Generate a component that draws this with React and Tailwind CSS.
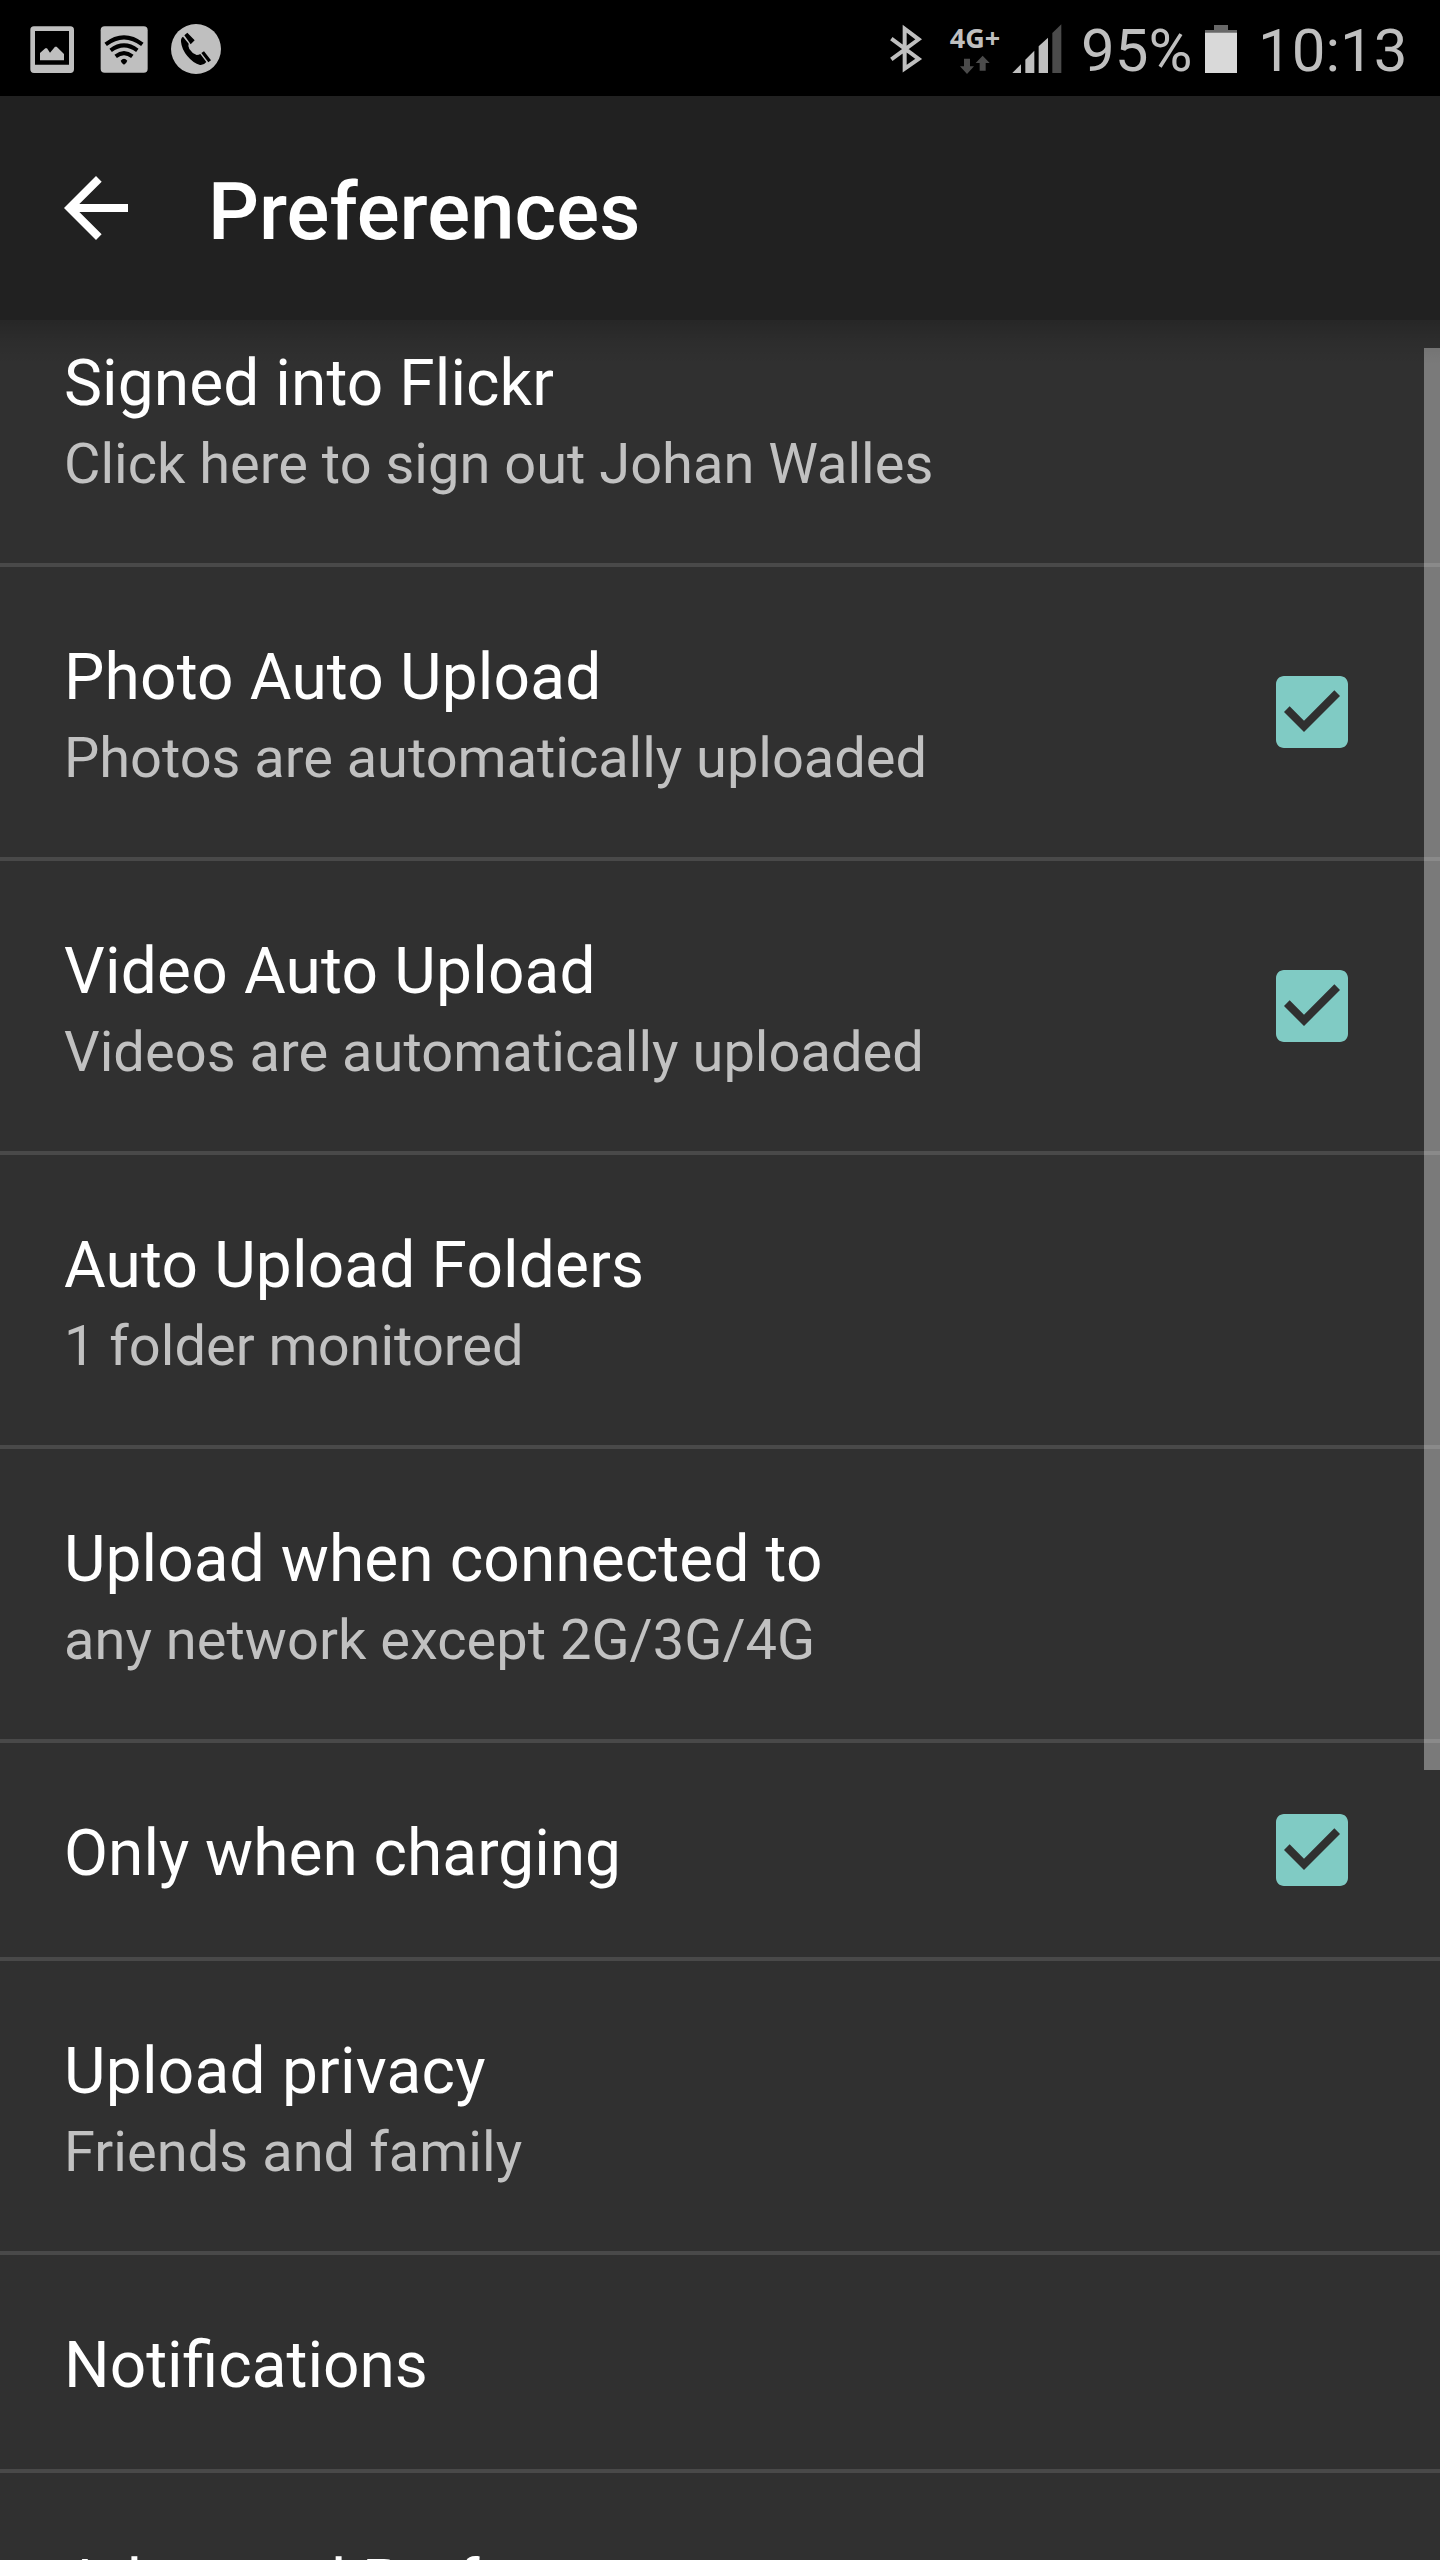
import React from "react";

const rows = [
  { title: "Signed into Flickr", summary: "Click here to sign out Johan Walles", tracking: "tracking-[0.08px]" },
  { title: "Photo Auto Upload", summary: "Photos are automatically uploaded", checked: true, tracking: "tracking-[0.17px]", summaryTracking: "tracking-[-0.04px]" },
  { title: "Video Auto Upload", summary: "Videos are automatically uploaded", checked: true, tracking: "tracking-[0.2px]", summaryTracking: "tracking-[0.03px]" },
  { title: "Auto Upload Folders", summary: "1 folder monitored", tracking: "tracking-[0.16px]" },
  { title: "Upload when connected to", summary: "any network except 2G/3G/4G", tracking: "tracking-[0.08px]", summaryTracking: "tracking-[0.02px]" },
  { title: "Only when charging", checked: true },
  { title: "Upload privacy", summary: "Friends and family", tracking: "tracking-[0.23px]", summaryTracking: "tracking-[0.04px]" },
  { title: "Notifications" },
  { title: "Advanced Preferences" },
];

function ImageIcon() {
  return (
    <svg className="ml-[30px] mt-[3px] h-[48px] w-[44px] shrink-0" viewBox="90 76 132 144" fill="#bfbfbf">
      <path fillRule="evenodd" d="M102 77H211Q222 77 222 88V206Q222 217 211 217H102Q91 217 91 206V88Q91 77 102 77ZM105 91V192H207V91Z" />
      <path d="M120 157L136 143H141L150 156L165 138H170L192 160V179H120Z" />
    </svg>
  );
}

function WifiIcon() {
  return (
    <svg className="ml-[26px] mt-[3px] h-[48px] w-[48px] shrink-0" viewBox="300 76 144 144">
      <rect x="302" y="77" width="141" height="139" rx="12" fill="#bfbfbf" />
      <g fill="none" stroke="#000" strokeWidth="12">
        <path d="M317 131Q372 89 427 131" />
        <path d="M332 149Q372 119 412 149" />
        <path d="M347 167Q372 148 397 167" />
      </g>
      <path d="M362 180Q372 168 382 180Q380 187 372 192Q364 187 362 180Z" />
    </svg>
  );
}

function PhoneIcon() {
  return (
    <svg className="ml-[22px] mt-[2px] h-[52px] w-[52px] shrink-0" viewBox="510 69 156 156">
      <circle cx="588" cy="147" r="75" fill="#bfbfbf" />
      <path d="M549 110L566 131Q563 139 568 147Q576 160 590 165Q596 165 601 162L619 186Q612 196 600 195Q580 190 562 168Q545 147 543 125Q542 114 549 110Z" />
      <path d="M553 106L562 98L584 121L572 133ZM604 159L612 154L633 181L625 187Z" />
    </svg>
  );
}

function BluetoothIcon() {
  return (
    <svg className="mt-[2px] h-[50px] w-[34px] shrink-0" viewBox="86 72 102 150" fill="none" stroke="#bfbfbf" strokeWidth="12">
      <path d="M93 116L175 177L133 206V86L175 118L93 178" />
    </svg>
  );
}

function NetworkIcon() {
  return (
    <div className="ml-[26px] flex w-[52px] shrink-0 flex-col items-center pt-[3px]">
      <div className="h-[26px] whitespace-nowrap font-['Open_Sans','Noto_Sans',sans-serif] text-[27px] font-bold leading-[26px] text-[#bfbfbf]">4G+</div>
      <svg className="mt-[4px] h-[20px] w-[30px]" viewBox="299 163 90 60" fill="#4b4b4b">
        <path d="M311 174H329V197H341L320 220L299 197H311Z" />
        <path d="M358 210H376V187H388L367 165L346 187H358Z" />
      </svg>
    </div>
  );
}

function SignalIcon() {
  return (
    <svg className="ml-[11px] mt-[2px] h-[50px] w-[50px] shrink-0" viewBox="455 72 150 150" fill="#bfbfbf">
      <path d="M456 219L482 193V219Z" />
      <path d="M495 219V179L522 152V219Z" />
      <path d="M535 219V139L563 113V219Z" />
      <path d="M576 219V99L603 73V219Z" fill="#4b4b4b" />
    </svg>
  );
}

function BatteryIcon() {
  return (
    <svg className="mt-[2px] h-[48px] w-[32px] shrink-0" viewBox="435 75 96 144">
      <path d="M462 75H504V90H531V99H435V90H462Z" fill="#686868" />
      <path d="M435 98H531V219H435Z" fill="#d9d9d9" />
    </svg>
  );
}

function StatusBar() {
  return (
    <div className="flex h-[96px] shrink-0 items-center bg-black text-[60px] leading-[70px] text-[#bfbfbf]">
      <ImageIcon />
      <WifiIcon />
      <PhoneIcon />
      <div className="ml-auto flex items-center">
        <BluetoothIcon />
        <NetworkIcon />
        <SignalIcon />
        <span className="ml-[19px] mt-[6px] w-[124px]">95%</span>
        <BatteryIcon />
        <span className="ml-[21px] mt-[6px] w-[182px]">10:13</span>
      </div>
    </div>
  );
}

function CheckBox() {
  return (
    <svg className="mr-[80px] h-[96px] w-[96px] shrink-0" viewBox="0 0 24 24" fill="#80cbc4">
      <path d="M19 3H5c-1.11 0-2 .9-2 2v14c0 1.1.89 2 2 2h14c1.11 0 2-.9 2-2V5c0-1.1-.89-2-2-2zm-9 14l-5-5 1.41-1.41L10 14.17l7.59-7.59L19 8l-9 9z" />
    </svg>
  );
}

function PreferenceRow({ title, summary, checked, tracking = "", summaryTracking = "" }) {
  return (
    <li className="flex items-center justify-between border-b-4 border-[#494949]">
      <div className="self-stretch pb-[61px] pl-[64px] pt-[68px]">
        <div className={`text-[64px] leading-[85px] text-white ${tracking}`}>{title}</div>
        {summary && (
          <div className={`mt-[1px] h-[75px] text-[56px] leading-[74px] text-[#c1c1c1] ${summaryTracking}`}>{summary}</div>
        )}
      </div>
      {checked && <CheckBox />}
    </li>
  );
}

export default function App() {
  return (
    <div className="relative flex h-[2560px] w-[1440px] flex-col overflow-hidden whitespace-nowrap bg-[#303030] font-[Roboto,sans-serif]">
      <StatusBar />
      <header className="flex h-[224px] shrink-0 items-center bg-[#212121] pl-[48px]">
        <svg className="h-[96px] w-[96px]" viewBox="0 0 24 24" fill="#fff">
          <path d="M20 11H7.83l5.59-5.59L12 4l-8 8 8 8 1.41-1.41L7.83 13H20v-2z" />
        </svg>
        <h1 className="ml-[64px] mt-[8px] text-[80px] font-medium leading-[94px] text-white">Preferences</h1>
      </header>
      <main className="relative min-h-0 flex-1 overflow-hidden">
        <ul className="-mt-[47px]">
          {rows.map((row) => (
            <PreferenceRow key={row.title} {...row} />
          ))}
        </ul>
        <div className="absolute right-0 top-[28px] h-[1422px] w-[16px] bg-white/36" />
        <div className="absolute inset-x-0 top-0 h-[44px] bg-linear-to-b from-black/20 via-black/7 to-transparent" />
      </main>
    </div>
  );
}
